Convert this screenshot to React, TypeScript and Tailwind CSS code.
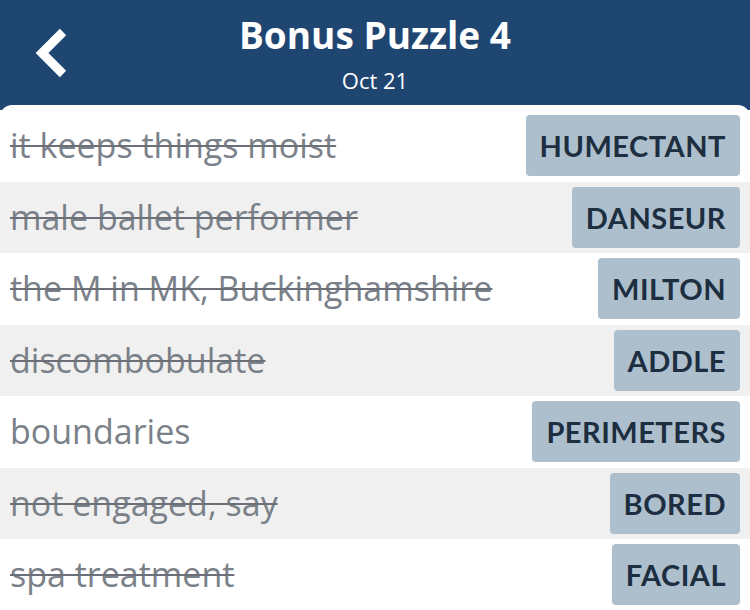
const clues = [
  { clue: "it keeps things moist", answer: "HUMECTANT", done: true },
  { clue: "male ballet performer", answer: "DANSEUR", done: true },
  { clue: "the M in MK, Buckinghamshire", answer: "MILTON", done: true },
  { clue: "discombobulate", answer: "ADDLE", done: true },
  { clue: "boundaries", answer: "PERIMETERS", done: false },
  { clue: "not engaged, say", answer: "BORED", done: true },
  { clue: "spa treatment", answer: "FACIAL", done: true },
]

const BackIcon = () => (
  <svg
    className="absolute left-0 top-0"
    width="100"
    height="105"
    viewBox="0 0 100 105"
    fill="none"
  >
    <polyline
      points="63,32 42,53 63,74"
      stroke="white"
      strokeWidth="9"
      strokeLinecap="butt"
      strokeLinejoin="miter"
    />
  </svg>
)

const App = () => {
  return (
    <div className="w-[750px] h-[610px] overflow-hidden bg-[#1f4571] font-['Open_Sans','Noto_Sans',sans-serif]">
      <div className="relative h-[105px] flex flex-col items-center text-white">
        <BackIcon />
        <h1 className="mt-[12px] text-[37px] leading-[46px] font-bold">Bonus Puzzle 4</h1>
        <p className="mt-[9px] text-[22px] leading-[26px]">Oct 21</p>
      </div>
      <div className="bg-white rounded-t-[12px] pt-[5px] h-[505px]">
        {clues.map((c, i) => (
          <div
            key={c.answer}
            className={`flex items-center justify-between h-[71.5px] pl-[10px] pr-[10px] ${
              i % 2 === 1 ? "bg-[#f0f0f0]" : "bg-white"
            }`}
          >
            <span
              className={`text-[34px] text-[#7b8189] ${
                c.done ? "line-through decoration-[2px] decoration-[#6b7078]" : ""
              }`}
            >
              {c.clue}
            </span>
            <span className="h-[61px] flex items-center px-[14px] rounded-[4px] bg-[#adbfcd] text-[#1c2e40] text-[29px] font-bold tracking-[0.5px] font-['Lato',sans-serif]">
              {c.answer}
            </span>
          </div>
        ))}
      </div>
    </div>
  )
}

export default App
